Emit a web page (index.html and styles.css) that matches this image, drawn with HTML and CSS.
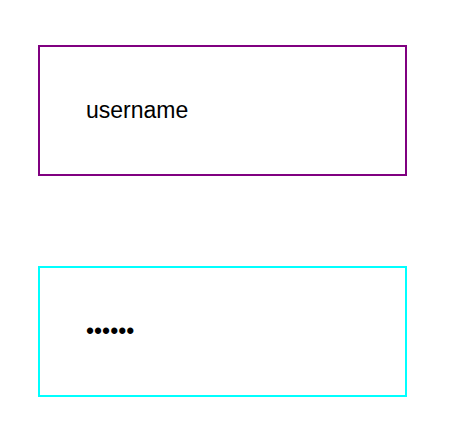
FILE: index.html
```html
<!DOCTYPE html>
<html lang="en">
<head>
<meta charset="utf-8">
<title>Login</title>
<link rel="stylesheet" href="styles.css">
</head>
<body>
<form class="login">
  <input class="field field-user" type="text" aria-label="Username" value="username">
  <input class="field field-password" type="password" aria-label="Password" value="secret">
</form>
</body>
</html>
```

FILE: styles.css
```css
body {
  margin: 0;
  background: #fff;
}

.login {
  display: flex;
  flex-direction: column;
  gap: 90px;
  padding: 45px 43px 35px 38px;
}

.field {
  box-sizing: border-box;
  width: 100%;
  margin: 0;
  padding: 50px 46px;
  border: 2px solid;
  border-radius: 0;
  outline: 0;
  background: #fff;
  color: #000;
  font-family: "Liberation Sans", Arial, sans-serif;
  font-size: 23px;
  line-height: 27px;
}

.field-user {
  border-color: purple;
}

.field-password {
  border-color: cyan;
}
```
